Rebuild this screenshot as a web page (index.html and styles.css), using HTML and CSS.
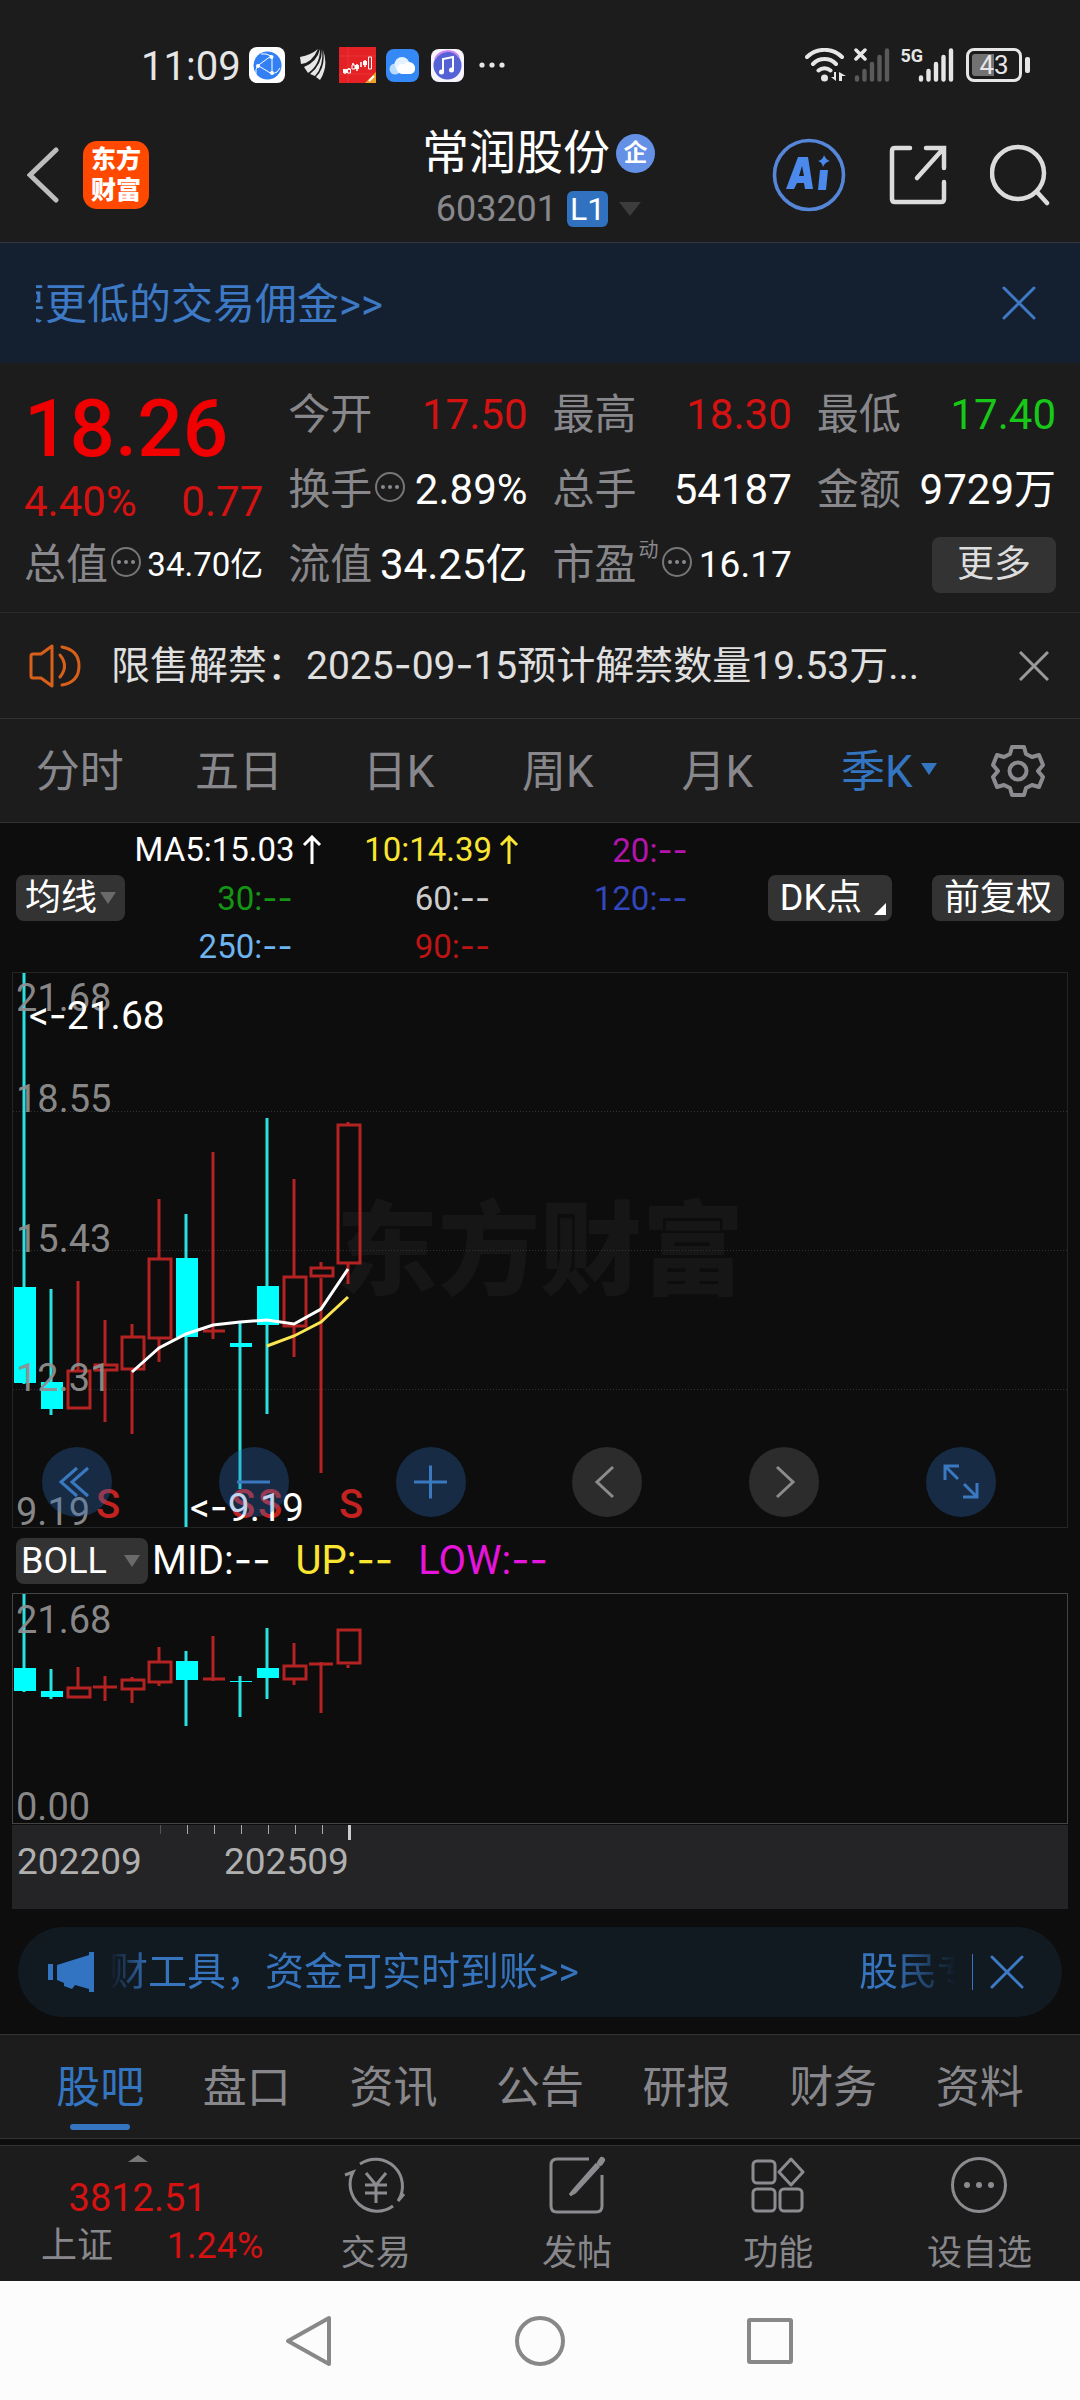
FILE: index.html
```html
<!DOCTYPE html>
<html lang="zh-CN">
<head>
<meta charset="utf-8">
<meta name="viewport" content="width=device-width">
<title>常润股份 603201</title>
<link rel="stylesheet" href="styles.css">
</head>
<body>
<header class="top">
  <div class="status">
    <div class="status-left">
      <span class="clock">11:09</span>
      <svg class="s-browser" width="36" height="36" viewBox="0 0 36 36"><rect width="36" height="36" rx="8" fill="#fff"/><circle cx="18.500" cy="18.500" r="14" fill="#3380f5"/><path d="M22 9 9 18.500 23 27V9M22 9q-5-3-10-2M9 18.500q-3 4-2 8M23 27q6-1 8-6" fill="none" stroke="#fff" stroke-width="1"/><g fill="#fff"><circle cx="22.500" cy="10" r="2"/><circle cx="9" cy="19" r="2"/><circle cx="23" cy="26" r="2"/></g></svg>
      <svg class="s-kite" width="26" height="32" viewBox="0 0 26 32"><g fill="#e6e6e6"><path d="M0 8Q11 6 18 0 12 14 1 15z"/><path d="M20 0Q20 16 8 24L4 18Q17 13 20 0z"/><path d="M22 0Q24 17 15 27L10 25Q22 16 22 0z"/><path d="M23 1Q29 17 20 31L16 28Q26 18 23 1z"/></g></svg>
      <svg class="s-stock" width="37" height="36" viewBox="0 0 37 36"><path fill="#e42225" d="M0 0h37v36H0z"/><path d="M0 9h37M0 27h37M9 0v36" stroke="#ee4a4c" stroke-width=".5"/><g stroke="#fff" fill="none"><path d="M6 22v5M10 21v2M14 16v2M18 17v7M22 15v5M26 13v7" stroke-width="1.500"/><path d="M29.500 10h3v12h-3zM8.500 22h3v4h-3zM13 18h3v4h-3z"/><path d="M4 24h4M16 20h4M24 16h4" stroke-width="4"/></g><path fill="#f0a02a" d="M37 25v11H26z"/><path d="m30 34 5-5" stroke="#fff" stroke-width="2"/></svg>
      <svg class="s-cloud" width="33" height="33" viewBox="0 0 33 33"><rect width="33" height="33" rx="8" fill="#3589f6"/><circle cx="9" cy="20" r="5.500" fill="#b9dbfd"/><circle cx="16" cy="15.500" r="7.500" fill="#e4f1ff"/><rect x="11" y="15" width="18" height="10" rx="5" fill="#fff"/><circle cx="23" cy="19" r="6" fill="#fff"/></svg>
      <svg class="s-music" width="33" height="33" viewBox="0 0 33 33"><rect width="33" height="33" rx="8" fill="#f7f4fc"/><circle cx="16.500" cy="16.500" r="14" fill="#5562d6"/><path d="M4 10a14 14 0 0 1 24-2" fill="none" stroke="#c586f0" stroke-width="2"/><path d="M12 23V10l10-2v13" fill="none" stroke="#fff" stroke-width="2"/><circle cx="10.500" cy="23" r="2.500" fill="#fff"/><circle cx="20.500" cy="21" r="2.500" fill="#fff"/></svg>
      <svg class="s-more" width="26" height="6" viewBox="0 0 26 6" fill="#e6e6e6"><circle cx="3" cy="3" r="2.600"/><circle cx="13" cy="3" r="2.600"/><circle cx="23" cy="3" r="2.600"/></svg>
    </div>
    <div class="status-right">
      <svg width="42" height="34" viewBox="0 0 42 34"><g fill="none" stroke="#e6e6e6" stroke-width="4" stroke-linecap="round"><path d="M2 9a25 25 0 0 1 35 0M8 16a16 16 0 0 1 23 0M13.500 22.500a9 9 0 0 1 12 0"/></g><circle cx="19.500" cy="30" r="3.500" fill="#e6e6e6"/><path fill="#e6e6e6" d="M26 29h3v-5h2v9zM34 24l7 4h-4v5h-3z"/></svg>
      <svg width="36" height="34" viewBox="0 0 36 34"><path d="m2 2 9 9m0-9-9 9" stroke="#e6e6e6" stroke-width="3.500" stroke-linecap="round"/><path d="M3 29.500v2M10.500 23v8.500M18 16v15.500M25.500 9v22.500M33 2.500v29" stroke="#5a5a5a" stroke-width="4.400" stroke-linecap="round"/></svg>
      <span class="fiveg">5G</span>
      <svg class="bars" width="36" height="34" viewBox="0 0 36 34"><path d="M3 29.500v2M10.500 23v8.500M18 16v15.500M25.500 9v22.500M33 2.500v29" stroke="#e6e6e6" stroke-width="4.400" stroke-linecap="round"/></svg>
      <span class="battery"><span class="level">43</span></span>
    </div>
  </div>
  <div class="titlebar">
    <div class="title-left">
      <button class="icon-btn" aria-label="返回"><svg width="32" height="56" viewBox="0 0 32 56"><path d="M29 3 3 28l26 25" fill="none" stroke="#bdbdbd" stroke-width="5" stroke-linecap="round"/></svg></button>
      <a class="logo" href="#home"><span>东方</span><span>财富</span></a>
    </div>
    <div class="title-mid">
      <h1>常润股份<span class="qi">企</span></h1>
      <p class="code">603201<span class="l1">L1</span><i class="tri"></i></p>
    </div>
    <div class="title-right">
      <button class="icon-btn" aria-label="AI"><svg width="74" height="74" viewBox="0 0 74 74"><circle cx="37" cy="37" r="34.500" fill="none" stroke="#5586d8" stroke-width="3.600"/><path fill="#4c89ec" fill-rule="evenodd" d="M26 19h10l5 32h-8l-1-6h-7l-3 6h-8zm4 9-3 10h5zM48 32h8l-2 20h-8zM52 17q2 5 6 6-5 1-7 6-1-5-5-6 5-1 6-6z"/></svg></button>
      <button class="icon-btn" aria-label="分享"><svg width="58" height="60" viewBox="0 0 58 60" fill="none" stroke="#dcdcdc" stroke-width="4.500" stroke-linecap="round"><path d="M21 3H6q-3 0-3 3v48q0 3 3 3h46q3 0 3-3V37"/><path d="M37 3h18v20M54 4 28 33"/></svg></button>
      <button class="icon-btn" aria-label="搜索"><svg width="60" height="62" viewBox="0 0 60 62" fill="none" stroke="#dcdcdc" stroke-width="4.500" stroke-linecap="round"><circle cx="28" cy="29" r="26"/><path d="m47 48 10 11"/></svg></button>
    </div>
  </div>
</header>

<aside class="banner">
  <a class="banner-text" href="#open">想要更低的交易佣金&gt;&gt;</a>
  <button class="icon-btn" aria-label="关闭"><svg width="34" height="34" viewBox="0 0 34 34"><path d="m2 2 30 30m0-30L2 32" stroke="#3d79c4" stroke-width="3" stroke-linecap="round"/></svg></button>
</aside>

<section class="quote">
  <div class="price-box">
    <div class="price">18.26</div>
    <div class="change"><span>4.40%</span><span>0.77</span></div>
  </div>
  <div class="stat"><span class="k">今开</span><span class="v up">17.50</span></div>
  <div class="stat"><span class="k">最高</span><span class="v up">18.30</span></div>
  <div class="stat"><span class="k">最低</span><span class="v down">17.40</span></div>
  <div class="stat"><span class="k">换手</span><svg class="info" width="32" height="32" viewBox="0 0 32 32"><use href="#dots"/></svg><span class="v">2.89%</span></div>
  <div class="stat"><span class="k">总手</span><span class="v">54187</span></div>
  <div class="stat"><span class="k">金额</span><span class="v">9729万</span></div>
  <div class="stat"><span class="k">总值</span><svg class="info" width="32" height="32" viewBox="0 0 32 32"><g id="dots"><circle cx="16" cy="16" r="14" fill="none" stroke="#77777a" stroke-width="2"/><g fill="#8a8a8e"><circle cx="9" cy="16" r="2"/><circle cx="16" cy="16" r="2"/><circle cx="23" cy="16" r="2"/></g></g></svg><span class="v small">34.70亿</span></div>
  <div class="stat"><span class="k">流值</span><span class="v">34.25亿</span></div>
  <div class="stat"><span class="k">市盈<sup>动</sup></span><svg class="info" width="32" height="32" viewBox="0 0 32 32"><use href="#dots"/></svg><span class="v mid">16.17</span></div>
  <div class="stat"><button class="more">更多</button></div>
</section>

<section class="notice">
  <svg width="52" height="44" viewBox="0 0 52 44" fill="none" stroke="#d9601a" stroke-width="3" stroke-linejoin="round"><path d="M23 2v40L12 34H4q-2 0-2-2V12q0-2 2-2h8z"/><path d="M31 11q9 11 0 22M33 3q17 3 17 19T33 41" stroke-linecap="round"/></svg>
  <a class="notice-text" href="#notice">限售解禁：2025<i class="dash">-</i>09<i class="dash">-</i>15预计解禁数量19.53万...</a>
  <button class="icon-btn" aria-label="关闭"><svg width="30" height="30" viewBox="0 0 30 30"><path d="m1 1 28 28m0-28L1 29" stroke="#9a9a9a" stroke-width="3"/></svg></button>
</section>

<nav class="periods">
  <button>分时</button><button>五日</button><button>日K</button><button>周K</button><button>月K</button><button class="on">季K<i class="tri"></i></button>
  <button class="gear" aria-label="设置"><svg width="54" height="54" viewBox="0 0 54 54" fill="none" stroke="#8c8c90" stroke-width="4" stroke-linejoin="round"><path d="M21 3h12l2 7 6 3 7-2 4 10-5 6 5 6-4 10-7-2-6 3-2 7H21l-2-7-6-3-7 2L2 33l5-6-5-6L6 11l7 2 6-3z"/><circle cx="27" cy="27" r="8.500"/></svg></button>
</nav>

<section class="ma">
  <button class="chip pick">均线<i class="tri"></i></button>
  <div class="ma-values">
    <span class="c-white">MA5:15.03<svg class="rise-arrow" width="22" height="30" viewBox="0 0 22 30"><path d="M11 29V2M3 10l8-8 8 8"/></svg></span><span class="c-yellow">10:14.39<svg class="rise-arrow" width="22" height="30" viewBox="0 0 22 30"><path d="M11 29V2M3 10l8-8 8 8"/></svg></span><span class="flat c-purple">20:<i class="dash">--</i></span>
    <span class="flat c-green">30:<i class="dash">--</i></span><span class="flat c-grey">60:<i class="dash">--</i></span><span class="flat c-blue">120:<i class="dash">--</i></span>
    <span class="flat c-sky">250:<i class="dash">--</i></span><span class="flat c-red">90:<i class="dash">--</i></span>
  </div>
  <div class="ma-actions">
    <button class="chip dk">DK点<i class="corner"></i></button>
    <button class="chip">前复权</button>
  </div>
</section>

<section class="chart">
  <svg class="plot" width="100%" height="554">
    <text class="mark" x="50%" y="314" text-anchor="middle">东方财富</text>
    <g class="grid"><line x1="0" x2="100%" y1="138.500" y2="138.500"/><line x1="0" x2="100%" y1="277.500" y2="277.500"/><line x1="0" x2="100%" y1="416.500" y2="416.500"/></g>
    <g class="fall">
      <path d="M11 0v411M38 316v126M173 241v315M227 348v168M254 145v296"/>
      <path class="body" d="M1 314h22v96H1zM28 409h22v27H28zM163 285h22v79h-22zM217 370h22v4h-22zM244 313h22v39h-22z"/>
    </g>
    <g class="rise">
      <path d="M65 308v89M92 347v44M92 398v51M119 351v12M119 397v64M146 226v59M146 366v23M200 179v187M190 358h22M281 206v97M281 354v30M308 289v5M308 305v195M335 149v2M335 291v20"/>
      <path d="M55 398h22v37H55zM82 392h22v5H82zM109 364h22v32h-22zM136 286h22v79h-22zM271 304h22v49h-22zM298 295h22v8h-22zM325 152h22v138h-22z"/>
    </g>
    <g class="axis-text"><text x="3" y="38">21.68</text><text x="3" y="139">18.55</text><text x="3" y="279">15.43</text><text x="3" y="418">12.31</text><text x="3" y="552">9.19</text></g>
    <path class="line5" d="m119 399 27-24 27-14 27-9 27-3 27-2 27 4 27-15 27-40"/>
    <path class="line10" d="m254 373 27-10 27-14 27-25"/>
    <g class="sell"><text x="83" y="545">S</text><text x="218" y="545">S</text><text x="245" y="545">S</text><text x="326" y="545">S</text></g>
    <g class="peak"><text x="16" y="56">&lt;<tspan class="dash">-</tspan>21.68</text><text x="177" y="548">&lt;<tspan class="dash">-</tspan>9.19</text></g>
  </svg>
  <div class="tools">
    <button aria-label="最早"><svg width="70" height="70" viewBox="0 0 70 70"><path d="M35 21 19 35l16 14M46 21 30 35l16 14"/></svg></button>
    <button aria-label="缩小"><svg width="70" height="70" viewBox="0 0 70 70"><path d="M18 35h33"/></svg></button>
    <button aria-label="放大"><svg width="70" height="70" viewBox="0 0 70 70"><path d="M18 35h33M34.500 18.500v33"/></svg></button>
    <button class="off" aria-label="前移"><svg width="70" height="70" viewBox="0 0 70 70"><path d="M41 20 25 35l16 15"/></svg></button>
    <button class="off" aria-label="后移"><svg width="70" height="70" viewBox="0 0 70 70"><path d="m28 20 16 15-16 15"/></svg></button>
    <button aria-label="全屏"><svg width="70" height="70" viewBox="0 0 70 70"><path d="M19 33V19h14M20 20l12 12M37 50h14V36M50 49 38 37"/></svg></button>
  </div>
</section>

<section class="boll">
  <button class="chip pick">BOLL<i class="tri"></i></button>
  <span class="c-white">MID:<i class="dash">--</i></span><span class="c-yellow">UP:<i class="dash">--</i></span><span class="c-pink">LOW:<i class="dash">--</i></span>
</section>

<section class="chart sub">
  <svg class="plot" width="100%" height="229">
    <g class="fall">
      <path d="M11 0v98M38 75v30M173 57v75M227 82v41M254 34v71"/>
      <path class="body" d="M1 74h22v23H1zM28 97h22v6H28zM163 67h22v19h-22zM217 87h22v1h-22zM244 74h22v10h-22z"/>
    </g>
    <g class="rise">
      <path d="M65 73v20M92 82v25M80 93h24M119 83v2M119 96v13M146 53v15M146 89v3M200 42v45M190 85h22M281 49v23M281 86v5M308 68v51M296 70h24M335 71v3"/>
      <path d="M55 94h22v9H55zM109 86h22v9h-22zM136 68h22v20h-22zM271 72h22v13h-22zM325 36h22v33h-22z"/>
    </g>
    <g class="axis-text"><text x="3" y="39">21.68</text><text x="3" y="226">0.00</text></g>
  </svg>
</section>
<div class="dates">
  <svg width="100%" height="84"><path d="M148.500 0v9" stroke="#555"/><path d="M175.500 0v9M202.500 0v9M229.500 0v9M256.500 0v9M283.500 0v9M310.500 0v9" stroke="#aaa"/><path d="M337.500 0v15" stroke="#ccc" stroke-width="3"/><text x="5" y="49">202209</text><text x="212" y="49">202509</text></svg>
</div>

<aside class="promo">
  <svg width="46" height="40" viewBox="0 0 46 40" fill="#3273c2"><path d="M0 12h5v16H0zM9 13l32-10V0h5v40h-5v-3l-14-4-3 4-8-3v-3l-7-3z"/></svg>
  <a class="promo-text" href="#tool"><span>财工具，资金可实时到账&gt;&gt;</span><span>股民专</span></a>
  <i class="bar"></i>
  <button class="icon-btn" aria-label="关闭"><svg width="34" height="34" viewBox="0 0 34 34"><path d="m2 2 30 30m0-30L2 32" stroke="#3d79c4" stroke-width="3" stroke-linecap="round"/></svg></button>
</aside>

<nav class="tabs">
  <a class="on" href="#guba">股吧</a><a href="#pankou">盘口</a><a href="#zixun">资讯</a><a href="#gonggao">公告</a><a href="#yanbao">研报</a><a href="#caiwu">财务</a><a href="#ziliao">资料</a>
</nav>

<footer class="bottom">
  <a class="index" href="#index">
    <i class="tri"></i>
    <span class="idx">3812.51</span>
    <span class="idx-row"><span>上证</span><span class="pct">1.24%</span></span>
  </a>
  <button><svg width="66" height="60" viewBox="0 0 66 60" fill="none" stroke="#8c8c90" stroke-width="3"><path d="M17 9A27 27 0 0 1 55 46l6-7M50 51A27 27 0 0 1 10 17l-8 3M23 18l10 12 10-12M33 30v18M22 30h22M22 38h22"/></svg>交易</button>
  <button><svg width="58" height="60" viewBox="0 0 58 60" fill="none" stroke="#8c8c90" stroke-width="3"><path d="M41 4H9q-6 0-6 6v41q0 6 6 6h39q6 0 6-6V20"/><path d="m48 10-22 25-4 5 5-3 23-25z" fill="#8c8c90"/><path d="m52 8 2-3" stroke-width="6" stroke-linecap="round"/></svg>发帖</button>
  <button><svg width="54" height="60" viewBox="0 0 54 60" fill="none" stroke="#8c8c90" stroke-width="3"><rect x="2" y="6" width="22" height="22" rx="4"/><rect x="2" y="34" width="22" height="22" rx="4"/><rect x="29" y="34" width="22" height="22" rx="4"/><path d="m40 4 12 13-12 13-12-13z" stroke-linejoin="round"/></svg>功能</button>
  <button><svg width="58" height="60" viewBox="0 0 58 60"><circle cx="29" cy="30" r="26.500" fill="none" stroke="#8c8c90" stroke-width="3"/><g fill="#8c8c90"><circle cx="17" cy="30" r="3"/><circle cx="29" cy="30" r="3"/><circle cx="41" cy="30" r="3"/></g></svg>设自选</button>
</footer>

<nav class="system">
  <button aria-label="返回"><svg width="52" height="52" viewBox="0 0 52 52"><path d="M45 3v46L4 26z"/></svg></button>
  <button aria-label="主页"><svg width="52" height="52" viewBox="0 0 52 52"><circle cx="26" cy="26" r="23"/></svg></button>
  <button aria-label="最近"><svg width="52" height="52" viewBox="0 0 52 52"><rect x="5" y="5" width="42" height="42" rx="1"/></svg></button>
</nav>
</body>
</html>
```
FILE: styles.css
```css
* { box-sizing: border-box; }
body {
  margin: 0;
  background: #0d0d0d;
  color: #fff;
  font-family: Roboto, "Noto Sans CJK SC", sans-serif;
  font-size: 42px;
}
a { color: inherit; text-decoration: none; }
button { border: 0; padding: 0; margin: 0; background: none; color: inherit; font: inherit; }
h1, p { margin: 0; font-weight: 400; }
svg { display: block; flex: none; }
i { font-style: normal; }
.icon-btn { display: flex; }
.dash { font-family: Inter, sans-serif; }
.tri { display: inline-block; border: 8px solid transparent; border-top: 12px solid #6a6a6a; border-bottom: 0; }

/* status bar and title */
.top { background: #1c1c1c; border-bottom: 1px solid #33373b; }
.status { display: flex; justify-content: space-between; padding: 45px 50px 33px 141px; line-height: 40px; }
.status-left, .status-right { display: flex; align-items: center; color: #e6e6e6; }
.clock { padding-top: 4px; font-size: 40px; line-height: 36px; }
.s-browser { margin-left: 8px; }
.s-kite { margin-left: 15px; }
.s-stock { margin-left: 13px; }
.s-cloud { margin-left: 10px; }
.s-music { margin-left: 12px; }
.s-more { margin-left: 15px; }
.status-right svg + svg { margin-left: 7px; }
.fiveg { align-self: flex-start; margin-left: 10px; font-size: 18px; line-height: 22px; font-weight: 700; }
.status-right .bars { margin-left: -5px; }
.battery { position: relative; width: 56px; margin: 0 8px 0 12px; padding: 3px; border: 3px solid #e6e6e6; border-radius: 8px; }
.battery::after { content: ""; position: absolute; right: -11px; top: 6px; bottom: 6px; width: 5px; border-radius: 2px; background: #e6e6e6; }
.level { display: block; font-size: 26px; line-height: 22px; text-align: center; background: linear-gradient(90deg, #727272 50%, transparent 50%); border-radius: 3px; }

.titlebar { display: grid; grid-template-columns: 1fr auto 1fr; align-items: center; padding: 5px 30px 15px 27px; }
.title-left { display: flex; align-items: center; gap: 24px; }
.logo { display: flex; flex-direction: column; align-items: center; padding: 3px 8px; border-radius: 14px; background: #ff4800; font-size: 25px; line-height: 31px; font-weight: 900; }
.title-mid h1 { display: flex; align-items: center; justify-content: center; gap: 6px; padding-top: 4px; font-size: 47px; line-height: 52px; }
.qi { width: 39px; border-radius: 50%; background: #6490e6; font-size: 24px; line-height: 39px; font-weight: 700; text-align: center; }
.code { display: flex; align-items: center; justify-content: center; margin-top: 12px; color: #88888c; font-size: 36px; line-height: 36px; }
.l1 { margin-left: 10px; padding: 0 3px; border-radius: 6px; background: #3072c0; color: #fff; font-size: 32px; }
.code .tri { margin-left: 11px; border-width: 14px 11px 0; border-top-color: #3c3c3c; }
.title-right { display: flex; align-items: center; justify-content: flex-end; gap: 43px; }

.banner { display: flex; align-items: center; justify-content: space-between; padding: 30px 44px 30px 36px; background: #14202f; color: #3d79c4; line-height: 56px; }
.banner-text { overflow: hidden; padding-top: 4px; white-space: nowrap; text-indent: -75px; }

/* quote */
.quote { display: grid; grid-template-columns: repeat(4, 1fr); grid-auto-rows: 75px; column-gap: 25px; padding: 14px 24px 10px; background: #1c1c1c; border-bottom: 1px solid #29292b; }
.price-box { grid-row: span 2; color: #e00a0a; }
.price { padding-top: 4px; color: #f00000; font-size: 80px; line-height: 96px; font-weight: 500; }
.change { display: flex; justify-content: space-between; color: #d51212; line-height: 50px; }
.stat { display: flex; align-items: center; line-height: 50px; white-space: nowrap; }
.k { color: #88888c; }
.k sup { font-size: 20px; line-height: 20px; vertical-align: 22px; margin-left: 2px; }
.info { margin: 0 0 6px 2px; }
.v { margin-left: auto; }
.v.small { font-size: 33px; }
.v.mid { font-size: 37px; }
.up { color: #d51212; }
.down { color: #18c818; }
.more { margin-left: auto; padding: 0 25px; border-radius: 8px; background: #333; color: #ddd; font-size: 37px; line-height: 56px; }

.notice { display: flex; align-items: center; padding: 22px 31px 22px 29px; background: #1c1c1c; border-bottom: 1px solid #333335; color: #e0e0e0; font-size: 39px; line-height: 60px; }
.notice-text { flex: 1; margin-left: 30px; }

.periods { display: grid; grid-template-columns: repeat(6, 160fr) 124fr; align-items: center; background: #1c1c1c; border-bottom: 1px solid #333335; color: #88888c; font-size: 44px; line-height: 99px; }
.periods button { position: relative; padding-top: 4px; }
.periods .on { color: #3475c2; }
.periods .on .tri { position: absolute; right: 19px; top: 44px; border-top-color: #3475c2; }
.periods .gear { display: flex; justify-content: center; padding-top: 0; }

/* moving averages */
.ma { display: flex; align-items: center; padding: 3px 16px 2px; }
.chip { position: relative; padding: 0 12px; border-radius: 8px; background: #333; color: #fff; font-size: 36px; line-height: 46px; }
.pick { padding: 0 9px; }
.pick .tri { margin-left: 3px; vertical-align: 6px; }
.ma-values { flex: 1; display: grid; grid-template-columns: repeat(3, 1fr); grid-auto-rows: 48px; margin-right: 50px; font-size: 33px; line-height: 48px; text-align: right; white-space: nowrap; }
.flat { padding-right: 30px; }
.rise-arrow { display: inline-block; margin-left: 6px; vertical-align: -4px; fill: none; stroke: currentColor; stroke-width: 3; }
.ma-actions { display: flex; gap: 40px; }
.dk { padding-right: 30px; }
.corner { position: absolute; right: 6px; bottom: 6px; border: 6px solid transparent; border-right-color: #fff; border-bottom-color: #fff; }
.c-white { color: #fff; }
.c-yellow { color: #fae632; }
.c-purple { color: #b414ac; }
.c-green { color: #149614; }
.c-grey { color: #ccc; }
.c-blue { color: #3246be; }
.c-sky { color: #6eb4f0; }
.c-red { color: #be1414; }
.c-pink { color: #e614dc; }

/* charts */
.chart { position: relative; margin: 0 12px; border: 1px solid #252525; }
.plot { overflow: hidden; }
.mark { fill: #161616; font-size: 102px; font-weight: 900; }
.grid line { stroke: #333; stroke-dasharray: 1 2; }
.fall path { stroke: #2ae0e0; stroke-width: 3; fill: none; }
.fall .body { stroke: none; fill: #00ffff; }
.rise path { stroke: #b42222; stroke-width: 3; fill: none; }
.axis-text { fill: #909090; fill-opacity: .95; font-size: 38px; }
.line5, .line10 { fill: none; stroke-width: 3; stroke: #fff; }
.line10 { stroke: #fae650; }
.sell { fill: #c22320; font-size: 40px; font-weight: 500; }
.peak { fill: #fff; font-size: 39px; }
.tools { position: absolute; left: 29px; right: 71px; bottom: 10px; display: flex; justify-content: space-between; }
.tools button { border-radius: 50%; background: rgba(46, 114, 200, .3); }
.tools path { fill: none; stroke: #3a78c0; stroke-width: 3; }
.tools .off { background: rgba(115, 115, 115, .3); }
.tools .off path { stroke: #8c8c8c; }

.boll { display: flex; align-items: center; gap: 25px; padding: 9px 16px; font-size: 40px; line-height: 46px; }
.boll .chip { margin-right: -21px; padding: 0 8px 0 5px; }
.boll .pick .tri { margin-left: 17px; }
.sub { border-color: #444; }
.dates { margin: 1px 12px 0; background: #242426; }
.dates text { fill: #b0b0b0; font-size: 37px; }

.promo { display: flex; align-items: center; margin: 18px; padding: 15px 38px 15px 30px; border-radius: 45px; background: #111921; color: #3674be; font-size: 39px; line-height: 60px; }
.promo-text { flex: 1; display: flex; justify-content: space-between; margin-left: 15px; overflow: hidden; white-space: nowrap; -webkit-mask-image: linear-gradient(90deg, transparent, #000 42px, #000 calc(100% - 66px), transparent); mask-image: linear-gradient(90deg, transparent, #000 42px, #000 calc(100% - 66px), transparent); }
.promo-text span:last-child { width: 98px; overflow: hidden; }
.promo .bar { width: 1px; height: 36px; margin: 0 17px 0 15px; background: #3674be; }

.tabs { display: grid; grid-template-columns: repeat(7, 1fr); margin-top: -1px; padding: 0 27px; background: #1c1c1c; border: solid #333335; border-width: 1px 0; color: #88888c; font-size: 44px; line-height: 99px; text-align: center; }
.tabs a { position: relative; padding-top: 4px; }
.tabs .on { color: #3475c2; }
.tabs .on::after { content: ""; position: absolute; left: 50%; bottom: 8px; width: 60px; height: 6px; margin-left: -30px; border-radius: 3px; background: #3475c2; }

.bottom { display: grid; grid-template-columns: 275fr repeat(4, 201fr); margin-top: 6px; padding: 9px 0 7px; background: #1c1c1c; border-top: 1px solid #333335; color: #88888c; font-size: 35px; line-height: 40px; }
.bottom button { display: flex; flex-direction: column; align-items: center; gap: 19px; }
.index { display: flex; flex-direction: column; align-items: center; }
.index .tri { border: 10px solid transparent; border-top: 0; border-bottom: 7px solid #77777a; }
.idx { margin-top: 15px; color: #d51212; font-size: 38px; line-height: 42px; }
.idx-row { align-self: stretch; display: flex; justify-content: space-between; padding: 0 12px 0 41px; margin-top: 7px; font-size: 36px; }
.pct { color: #d51212; }

.system { display: flex; justify-content: center; gap: 178px; padding: 34px 0; background: #fcfcfc; }
.system path, .system circle, .system rect { fill: none; stroke: #888; stroke-width: 4; stroke-linejoin: round; }
```
